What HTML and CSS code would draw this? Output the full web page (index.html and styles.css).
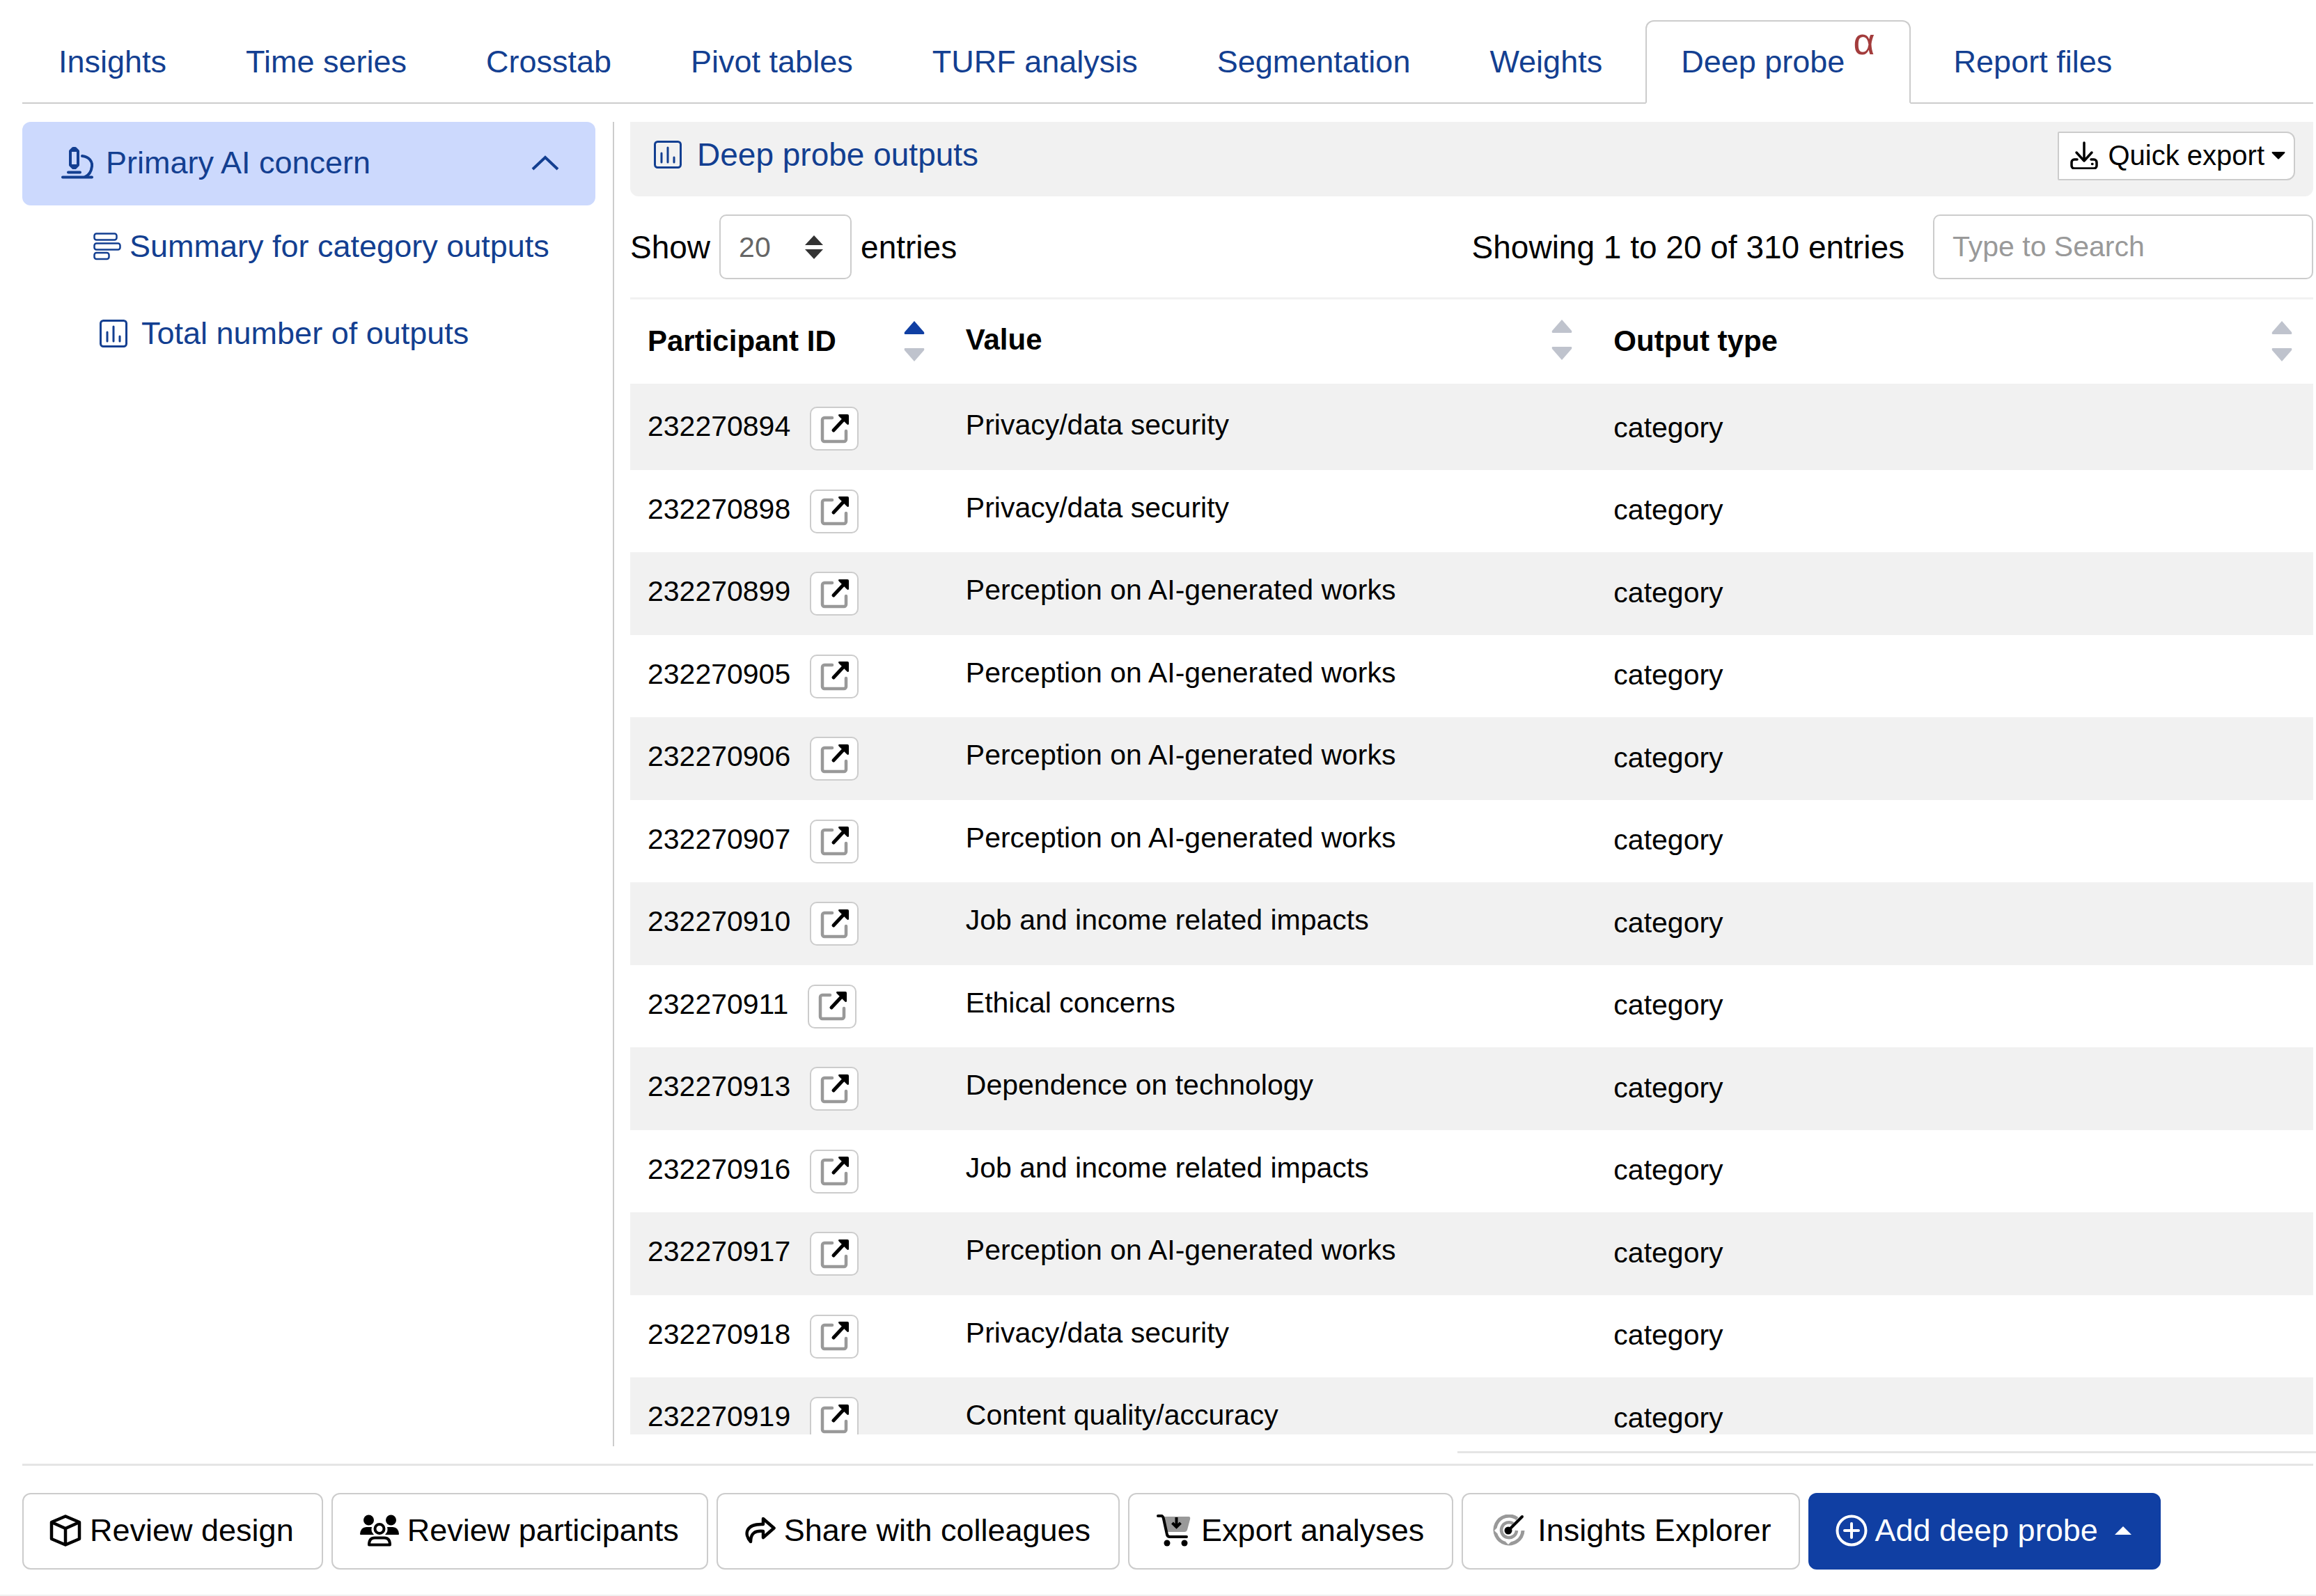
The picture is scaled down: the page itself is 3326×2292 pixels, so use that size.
FILE: index.html
```
<!DOCTYPE html>
<html lang="en">
<head>
    <meta charset="utf-8">
    <title>Deep probe outputs</title>
    <link rel="stylesheet" href="styles.css">
</head>
<body>
    <svg class="sprite" aria-hidden="true">
        <symbol id="i-chart" viewBox="0 0 40 40">
            <rect x="1.5" y="1.5" width="37" height="37" rx="4" fill="none" stroke="currentColor" stroke-width="3"/>
            <path d="M11 18v13M20 10v21M29 24v7" fill="none" stroke="currentColor" stroke-width="3" stroke-linecap="round"/>
        </symbol>
        <symbol id="i-open" viewBox="0 0 42 42">
            <path d="M17 5H6a3 3 0 0 0-3 3v28a3 3 0 0 0 3 3h28a3 3 0 0 0 3-3V24" fill="none" stroke="#999" stroke-width="4.500" stroke-linecap="round"/>
            <path d="M19 23 34 7" stroke="#000" stroke-width="5" stroke-linecap="round"/>
            <path d="M27 0h12a2 2 0 0 1 2 2v12q-1 2-3 0L27 3q-2-2 0-3z" fill="#000"/>
        </symbol>
        <symbol id="i-sort" viewBox="0 0 30 58">
            <path class="up" d="M15 0 29 16q1 3-1 3H2q-2 0-1-3z"/>
            <path class="down" d="M15 58 29 42q1-3-1-3H2q-2 0-1 3z"/>
        </symbol>
    </svg>

    <nav class="tabs">
        <a href="#" class="tab">Insights</a>
        <a href="#" class="tab">Time series</a>
        <a href="#" class="tab">Crosstab</a>
        <a href="#" class="tab">Pivot tables</a>
        <a href="#" class="tab">TURF analysis</a>
        <a href="#" class="tab">Segmentation</a>
        <a href="#" class="tab">Weights</a>
        <a href="#" class="tab active">Deep probe<sup class="alpha">α</sup></a>
        <a href="#" class="tab">Report files</a>
    </nav>

    <div class="layout">
        <aside class="sidebar">
            <button type="button" class="probe">
                <svg class="probe-icon" viewBox="0 0 46 46" fill="none" stroke="currentColor">
                    <path d="M2 43.500h42M10 36.500h17" stroke-width="4" stroke-linecap="round"/>
                    <path d="M30 13c10 1 15 8 14 15-1 8-5 13-10 15" stroke-width="4" stroke-linecap="round"/>
                    <path d="M13 6v20l4 4h3l4-4V6l-4-4h-3z" stroke-width="4" stroke-linejoin="round"/>
                    <path d="M14 5h9M14 27h9" stroke-width="4"/>
                </svg>
                <span>Primary AI concern</span>
                <svg class="chevron" viewBox="0 0 40 22"><path d="M2 20 20 3l18 17" fill="none" stroke="currentColor" stroke-width="4"/></svg>
            </button>
            <ul class="outputs">
                <li><a href="#" class="output">
                    <svg class="icon" viewBox="0 0 40 40" fill="none" stroke="currentColor" stroke-width="2.500">
                        <rect x="1.500" y="1.500" width="32" height="9" rx="3"/>
                        <rect x="1.500" y="15.500" width="37" height="9" rx="3"/>
                        <rect x="1.500" y="29" width="21" height="9" rx="3"/>
                    </svg>Summary for category outputs</a></li>
                <li><a href="#" class="output total"><svg class="icon"><use href="#i-chart"/></svg>Total number of outputs</a></li>
            </ul>
        </aside>

        <main class="panel">
            <header class="panel-head">
                <h1><svg class="icon"><use href="#i-chart"/></svg>Deep probe outputs</h1>
                <button type="button" class="quick-export">
                    <svg class="icon" viewBox="0 0 40 40" fill="none" stroke="currentColor" stroke-width="3.500" stroke-linecap="round" stroke-linejoin="round">
                        <path d="M20 2v26M9 16l11 12 11-12"/>
                        <path d="M10 26H6a4 4 0 0 0-4 4v5a4 4 0 0 0 4 4h28a4 4 0 0 0 4-4v-5a4 4 0 0 0-4-4h-4M31.500 32.500h.5"/>
                    </svg>
                    <span>Quick export</span>
                    <svg class="caret" viewBox="0 0 20 11"><path d="M1 0h18q1 1 0 2l-8 8q-1 1-2 0L1 2Q0 1 1 0z"/></svg>
                </button>
            </header>

            <div class="controls">
                <label for="length">Show</label>
                <span class="select">
                    <select id="length"><option>20</option><option>50</option><option>100</option></select>
                    <svg class="select-arrows" viewBox="0 0 26 34"><path d="M13 0 26 14H0zM13 34 26 20H0z"/></svg>
                </span>
                <label for="length">entries</label>
                <span class="info">Showing 1 to 20 of 310 entries</span>
                <input type="search" class="search" placeholder="Type to Search" aria-label="Search">
            </div>

            <div class="table-wrap">
                <table>
                    <colgroup><col class="c-id"><col class="c-value"><col></colgroup>
                    <thead>
                        <tr>
                            <th><button type="button" class="sort asc">Participant ID <svg><use href="#i-sort"/></svg></button></th>
                            <th><button type="button" class="sort">Value <svg><use href="#i-sort"/></svg></button></th>
                            <th><button type="button" class="sort">Output type <svg><use href="#i-sort"/></svg></button></th>
                        </tr>
                    </thead>
                    <tbody>
                        <tr><td>232270894 <button class="open" aria-label="Open"><svg><use href="#i-open"/></svg></button></td><td>Privacy/data security</td><td>category</td></tr>
                        <tr><td>232270898 <button class="open" aria-label="Open"><svg><use href="#i-open"/></svg></button></td><td>Privacy/data security</td><td>category</td></tr>
                        <tr><td>232270899 <button class="open" aria-label="Open"><svg><use href="#i-open"/></svg></button></td><td>Perception on AI-generated works</td><td>category</td></tr>
                        <tr><td>232270905 <button class="open" aria-label="Open"><svg><use href="#i-open"/></svg></button></td><td>Perception on AI-generated works</td><td>category</td></tr>
                        <tr><td>232270906 <button class="open" aria-label="Open"><svg><use href="#i-open"/></svg></button></td><td>Perception on AI-generated works</td><td>category</td></tr>
                        <tr><td>232270907 <button class="open" aria-label="Open"><svg><use href="#i-open"/></svg></button></td><td>Perception on AI-generated works</td><td>category</td></tr>
                        <tr><td>232270910 <button class="open" aria-label="Open"><svg><use href="#i-open"/></svg></button></td><td>Job and income related impacts</td><td>category</td></tr>
                        <tr><td>232270911 <button class="open" aria-label="Open"><svg><use href="#i-open"/></svg></button></td><td>Ethical concerns</td><td>category</td></tr>
                        <tr><td>232270913 <button class="open" aria-label="Open"><svg><use href="#i-open"/></svg></button></td><td>Dependence on technology</td><td>category</td></tr>
                        <tr><td>232270916 <button class="open" aria-label="Open"><svg><use href="#i-open"/></svg></button></td><td>Job and income related impacts</td><td>category</td></tr>
                        <tr><td>232270917 <button class="open" aria-label="Open"><svg><use href="#i-open"/></svg></button></td><td>Perception on AI-generated works</td><td>category</td></tr>
                        <tr><td>232270918 <button class="open" aria-label="Open"><svg><use href="#i-open"/></svg></button></td><td>Privacy/data security</td><td>category</td></tr>
                        <tr><td>232270919 <button class="open" aria-label="Open"><svg><use href="#i-open"/></svg></button></td><td>Content quality/accuracy</td><td>category</td></tr>
                    </tbody>
                </table>
            </div>
            <div class="panel-end"></div>
        </main>
    </div>

    <footer class="actions">
        <button type="button" class="btn">
            <svg class="btn-icon" viewBox="0 0 46 46" fill="none" stroke="currentColor" stroke-width="4.500" stroke-linejoin="round">
                <path d="M23 2.500 43 11v24L23 43.500 3 35V11zM3 11l20 9 20-9M23 20v23"/>
            </svg>Review design</button>
        <button type="button" class="btn">
            <svg class="btn-icon people" viewBox="0 0 56 46" fill="currentColor">
                <circle cx="12.500" cy="8" r="7.500"/><circle cx="44.500" cy="8" r="7.500"/>
                <path d="M0 28q1-10 9-10h8q-2 6 3 11H1q-1 0-1-1zM56 28q-1-10-9-10h-8q2 6-3 11h19q1 0 1-1z"/>
                <circle cx="28" cy="20.500" r="6.500" fill="none" stroke="currentColor" stroke-width="4"/>
                <path d="M13 43.500q0-10 8-10h14q8 0 8 10z" fill="none" stroke="currentColor" stroke-width="4" stroke-linejoin="round"/>
            </svg>Review participants</button>
        <button type="button" class="btn">
            <svg class="btn-icon" viewBox="0 0 46 46" fill="none" stroke="currentColor" stroke-width="4.500" stroke-linejoin="round">
                <path d="M28 6 43.500 19.500 28 33v-9C17 23 10 26 10 39 0 28 3 13 28 14z"/>
            </svg>Share with colleagues</button>
        <button type="button" class="btn">
            <svg class="btn-icon cart" viewBox="0 0 50 46">
                <path d="M11 3h35q3 0 2 4l-4 15q-1 3-4 3H15z" fill="#999"/>
                <path d="M2 2h5q2 0 3 4l5 23q1 3 4 3h24" fill="none" stroke="currentColor" stroke-width="4" stroke-linecap="round"/>
                <path d="M28.500 4v13M22.500 12l6 6 6-6" fill="none" stroke="currentColor" stroke-width="4"/>
                <circle cx="15" cy="41" r="4.500" fill="currentColor"/><circle cx="40" cy="41" r="4.500" fill="currentColor"/>
            </svg>Export analyses</button>
        <button type="button" class="btn">
            <svg class="btn-icon spaced" viewBox="0 0 46 46" fill="none">
                <path d="M35 6a20 20 0 1 0 8 17" stroke="#999" stroke-width="5"/>
                <path d="M29 13a11 11 0 1 0 5 10" stroke="#999" stroke-width="4.500"/>
                <path d="m22 43-4-4h8zM2 23l4-4v8z" fill="#fff"/>
                <circle cx="22" cy="23" r="5.500" fill="currentColor"/>
                <path d="M22 23 42 3" stroke="currentColor" stroke-width="4" stroke-linecap="round"/>
            </svg>Insights Explorer</button>
        <button type="button" class="btn primary">
            <svg class="btn-icon" viewBox="0 0 46 46" fill="none" stroke="currentColor" stroke-width="4">
                <circle cx="23" cy="23" r="20.500"/>
                <path d="M23 13v20M13 23h20" stroke-linecap="round"/>
            </svg>Add deep probe
            <svg class="caret-up" viewBox="0 0 24 12"><path d="M12 0 24 12H0z" fill="currentColor"/></svg></button>
    </footer>
</body>
</html>
```
FILE: styles.css
```
:root {
    --blue: #103fa3;
    --link: #133f91;
    --light: #ccd9fd;
    --stripe: #f1f1f1;
    --border: #ccc;
    --rule: #e5e5e5;
    --muted: #bfc3cd;
}
* { box-sizing: border-box; }
body { display: flex; flex-direction: column; height: 100vh; margin: 0; padding: 29px 4px 0 32px; border-bottom: 2px solid #f0f0f0; background: #fff; color: #000; font: 46px "Liberation Sans", Arial, sans-serif; overflow: hidden; }
button, select, input { font: inherit; color: inherit; margin: 0; }
button { cursor: pointer; }
a { color: var(--link); text-decoration: none; }
svg { flex: none; display: block; }
.sprite { position: absolute; width: 0; height: 0; }
.icon { width: 40px; height: 40px; }

/* top tabs */
.tabs { display: flex; gap: 10px; border-bottom: 2px solid var(--border); font-size: 45px; }
.tab { height: 120px; margin-bottom: -2px; padding: 0 50px; border: 2px solid transparent; border-radius: 12px 12px 0 0; line-height: 116px; white-space: nowrap; }
.tab.active { padding: 0 49px; border-color: var(--border); border-bottom-color: #fff; background: #fff; }
.alpha { margin-left: 12px; color: #a33c3c; font-size: 54px; line-height: 0; vertical-align: 26px; }

.layout { flex: 1; min-height: 0; display: flex; gap: 23px; margin-top: 26px; }

/* sidebar */
.sidebar { flex: none; width: 850px; margin-bottom: 10px; padding-right: 25px; border-right: 2px solid var(--border); font-size: 45px; }
.probe { display: flex; align-items: center; gap: 18px; width: 100%; height: 120px; padding: 0 52px 3px 56px; border: 0; border-radius: 12px; background: var(--light); color: var(--link); }
.probe-icon { width: 46px; height: 46px; }
.chevron { width: 40px; height: 22px; margin-left: auto; }
.outputs { margin: 0; padding: 0; list-style: none; }
.output { display: flex; align-items: center; gap: 12px; height: 125px; padding: 0 0 7px 102px; white-space: nowrap; }
.output.total { gap: 20px; padding-left: 111px; }

/* outputs panel */
.panel { flex: 1; min-width: 0; display: flex; flex-direction: column; }
.panel-head { display: flex; justify-content: space-between; padding: 14px 26px 23px 34px; border-radius: 0 0 12px 12px; background: var(--stripe); }
h1 { display: flex; align-items: center; gap: 22px; height: 66px; margin: 0; color: var(--link); font-size: 46px; font-weight: normal; }
.quick-export { display: flex; align-items: center; gap: 14px; height: 70px; padding: 0 12px 2px 16px; border: 2px solid var(--border); border-radius: 2px 12px 12px 2px; background: #fff; font-size: 40px; }
.quick-export .caret { width: 20px; height: 11px; margin-left: -4px; }
.controls { display: flex; align-items: center; gap: 13px; margin: 26px 0; }
.select { position: relative; }
.select select { display: block; width: 190px; height: 93px; padding: 0 26px; border: 2px solid var(--border); border-radius: 10px; background: #fff; color: #666; font-size: 41px; appearance: none; }
.select-arrows { position: absolute; right: 41px; top: 30px; width: 26px; height: 34px; fill: #333; pointer-events: none; }
.info { margin-left: auto; }
.search { width: 546px; height: 93px; margin-left: 28px; padding: 0 26px; border: 2px solid var(--border); border-radius: 10px; font-size: 41px; }
.search::placeholder { color: #999; }

.table-wrap { flex: 1; min-height: 0; overflow: hidden; }
table { width: 100%; table-layout: fixed; border-collapse: separate; border-spacing: 0; font-size: 42px; }
.c-id { width: 18.9%; }
.c-value { width: 38.5%; }
th { height: 129px; padding: 0 34px 2px 25px; border-top: 3px solid var(--stripe); border-bottom: 5px solid var(--stripe); }
th:nth-child(2) { padding-bottom: 6px; }
th:last-child { padding-right: 30px; }
.sort { display: flex; align-items: center; justify-content: space-between; width: 100%; padding: 0; border: 0; background: none; font-weight: bold; }
.sort svg { width: 30px; height: 58px; fill: var(--muted); }
.sort.asc svg { --up: var(--blue); }
.up { fill: var(--up, var(--muted)); }
td { height: 118px; padding: 0 25px; vertical-align: middle; white-space: nowrap; font-size: 41px; }
td:nth-child(2) { padding-bottom: 10px; }
td:nth-child(3) { padding-bottom: 3px; }
tr:nth-child(odd) td { height: 119px; background: var(--stripe); }
.open { width: 70px; height: 63px; margin-left: 16px; padding: 0 13px; border: 2px solid var(--border); border-radius: 10px; background: #fff; vertical-align: middle; }
.open svg { width: 42px; height: 42px; }
.panel-end { width: 51%; margin: 24px -4px 0 auto; border-top: 3px solid var(--rule); }

/* bottom actions */
.actions { display: flex; gap: 12px; margin-top: 15px; padding: 39px 0 36px; border-top: 3px solid var(--rule); font-size: 45px; }
.btn { display: flex; align-items: center; height: 110px; padding: 0 40px 2px 37px; border: 2px solid var(--border); border-radius: 12px; background: #fff; white-space: nowrap; }
.btn-icon { width: 46px; height: 46px; margin-right: 12px; }
.btn-icon.people { width: 56px; margin: 0 12px 0 2px; }
.btn-icon.cart { width: 50px; margin: 0 14px 0 2px; }
.btn-icon.spaced { margin: 0 18px 0 6px; }
.btn.primary { border-color: var(--blue); background: var(--blue); color: #fff; }
.btn.primary .btn-icon { margin-right: 10px; }
.caret-up { width: 24px; height: 12px; margin-left: 24px; }
```
